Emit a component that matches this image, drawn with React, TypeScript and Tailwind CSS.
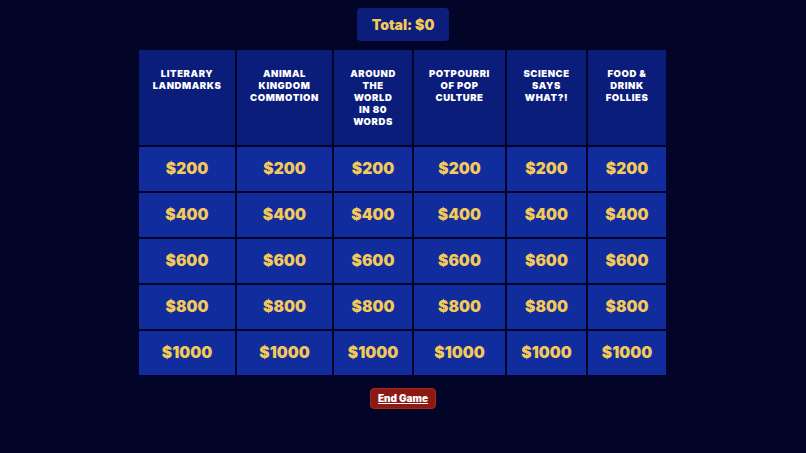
import React from "react";

const CATEGORIES: { title: string[]; width: string }[] = [
  { title: ["LITERARY", "LANDMARKS"], width: "w-[96px]" },
  { title: ["ANIMAL", "KINGDOM", "COMMOTION"], width: "w-[95px]" },
  { title: ["AROUND", "THE", "WORLD", "IN 80", "WORDS"], width: "w-[78px]" },
  { title: ["POTPOURRI", "OF POP", "CULTURE"], width: "w-[91px]" },
  { title: ["SCIENCE", "SAYS", "WHAT?!"], width: "w-[79px]" },
  { title: ["FOOD &", "DRINK", "FOLLIES"], width: "w-[78px]" },
];

const VALUES = [200, 400, 600, 800, 1000];

const font = { fontFamily: 'Inter, "Liberation Sans", Arial, sans-serif' };

export default function App() {
  return (
    <div
      className="flex h-[453px] w-full flex-col items-center bg-[#020527] pt-2"
      style={font}
    >
      {/* Score */}
      <div className="flex h-[33px] items-center rounded bg-[#0c1e7c] px-[15px] text-[14px] font-black text-[#f3c95a]">
        Total: $0
      </div>

      {/* Board */}
      <div className="mr-[1px] mt-[9px] flex gap-[2px]">
        {CATEGORIES.map((cat) => (
          <div key={cat.title.join(" ")} className={`flex flex-col gap-[2px] ${cat.width}`}>
            <div className="h-[95px] bg-[#0b1d7a] pt-[18px] text-center text-[9.5px] font-black leading-[12px] tracking-[0.06em] text-white">
              {cat.title.map((line) => (
                <div key={line}>{line}</div>
              ))}
            </div>
            {VALUES.map((v) => (
              <div
                key={v}
                className="flex h-[44px] cursor-pointer items-center justify-center bg-[#112c9c] text-[15.5px] font-black text-[#f3c95a] hover:bg-[#1838b8]"
              >
                ${v}
              </div>
            ))}
          </div>
        ))}
      </div>

      {/* End game */}
      <button className="mt-[13px] h-[21px] rounded-sm border border-[#a8261d] bg-[#8c1a14] px-[7px] text-[10px] font-black text-white underline">
        End Game
      </button>
    </div>
  );
}
